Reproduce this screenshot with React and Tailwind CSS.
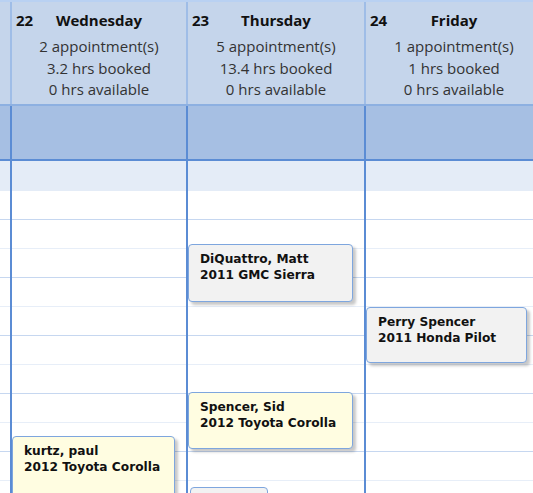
import React from "react";

const days = [
  { num: "22", name: "Wednesday", appts: "2 appointment(s)", booked: "3.2 hrs booked", avail: "0 hrs available" },
  { num: "23", name: "Thursday", appts: "5 appointment(s)", booked: "13.4 hrs booked", avail: "0 hrs available" },
  { num: "24", name: "Friday", appts: "1 appointment(s)", booked: "1 hrs booked", avail: "0 hrs available" },
];
const widths = ["w-[176px]", "w-[178px]", "w-[178px]"];

function Rows() {
  const rows = [];
  for (let i = 0; i < 11; i++) {
    rows.push(
      <div
        key={i}
        className={i % 2 === 0 ? "h-[29px] border-b border-[#c6d7f0]" : "h-[29px] border-b border-[#e7eef8]"}
      />
    );
  }
  return rows;
}

function Card({ className, name, car }) {
  return (
    <div
      className={
        "absolute rounded-[4px] border border-[#7ea6de] pl-[11px] pt-[6px] text-[12.2px] leading-[16px] font-bold text-[#111] shadow-[3px_3px_3px_rgba(0,0,0,0.22)] " +
        className
      }
      style={{ fontFamily: '"DejaVu Sans", Verdana, sans-serif' }}
    >
      <div>{name}</div>
      <div>{car}</div>
    </div>
  );
}

export default function App() {
  return (
    <div
      className="relative w-[533px] h-[493px] overflow-hidden bg-white"
      style={{ fontFamily: '"Open Sans", "Noto Sans", sans-serif' }}
    >
      <div className="h-[2px] bg-[#b9d1f2]" />
      {/* header */}
      <div className="flex h-[102px] bg-[#c5d5eb]">
        <div className="w-[10px] shrink-0" />
        {days.map((d, i) => (
          <div key={d.num} className={widths[i] + " shrink-0 border-l-2 border-[#9fbde7] relative"}>
            <div className="absolute left-[4px] top-[7px] text-[15px] font-bold text-[#111] leading-[22px]">{d.num}</div>
            <div className="pt-[7px] text-center text-[15px] font-bold text-[#111] leading-[22px]">{d.name}</div>
            <div className="pt-[5px] text-center text-[15px] leading-[21.5px] text-[#333]">
              <div>{d.appts}</div>
              <div>{d.booked}</div>
              <div>{d.avail}</div>
            </div>
          </div>
        ))}
      </div>
      <div className="h-[2px] bg-[#8db0e1]" />
      {/* all-day band */}
      <div className="flex h-[53px] bg-[#a6bfe3]">
        <div className="w-[10px] shrink-0" />
        {widths.map((w, i) => (
          <div key={i} className={w + " shrink-0 border-l-2 border-[#5b8cd4]"} />
        ))}
      </div>
      <div className="h-[2px] bg-[#5b8cd4]" />
      {/* body */}
      <div className="flex">
        <div className="w-[10px] shrink-0">
          <div className="h-[30px] bg-[#e4ecf7]" />
          <Rows />
        </div>
        {widths.map((w, i) => (
          <div key={i} className={w + " shrink-0 border-l-2 border-[#5b8cd4]"}>
            <div className="h-[30px] bg-[#e4ecf7]" />
            <Rows />
          </div>
        ))}
      </div>

      <Card className="left-[188px] top-[244px] w-[165px] h-[58px] bg-[#f2f2f2]" name="DiQuattro, Matt" car="2011 GMC Sierra" />
      <Card className="left-[366px] top-[307px] w-[161px] h-[56px] bg-[#f2f2f2]" name="Perry Spencer" car="2011 Honda Pilot" />
      <Card className="left-[188px] top-[392px] w-[165px] h-[57px] bg-[#fffde1]" name="Spencer, Sid" car="2012 Toyota Corolla" />
      <Card className="left-[12px] top-[436px] w-[163px] h-[70px] bg-[#fffde1]" name="kurtz, paul" car="2012 Toyota Corolla" />
      <div className="absolute left-[190px] top-[487px] w-[78px] h-[20px] rounded-[4px] border border-[#7ea6de] bg-[#f2f2f2]" />
    </div>
  );
}
